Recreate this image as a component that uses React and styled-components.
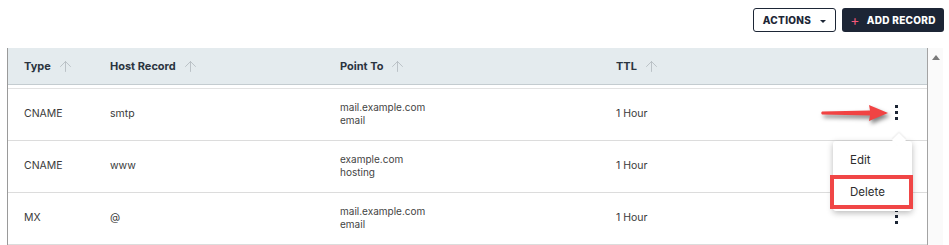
import React from "react";
import styled, { createGlobalStyle } from "styled-components";
import { ArrowUp } from "lucide-react";

const GlobalStyle = createGlobalStyle`
  body {
    margin: 0;
    background: #fff;
    font-family: Inter, "Liberation Sans", Arial, sans-serif;
  }
`;

const records = [
  { type: "CNAME", host: "smtp", point: "mail.example.com", note: "email", ttl: "1 Hour" },
  { type: "CNAME", host: "www", point: "example.com", note: "hosting", ttl: "1 Hour" },
  { type: "MX", host: "@", point: "mail.example.com", note: "email", ttl: "1 Hour" },
];

const columns = ["Type", "Host Record", "Point To", "TTL"];

const App = () => {
  return (
    <Page>
      <GlobalStyle />
      <Toolbar>
        <OutlineButton>
          ACTIONS <Caret />
        </OutlineButton>
        <PrimaryButton>
          <Plus>+</Plus> ADD RECORD
        </PrimaryButton>
      </Toolbar>
      <TableArea>
        <TableWrap>
          <HeaderRow>
            {columns.map((c) => (
              <HeadCell key={c}>
                {c}
                <ArrowUp size={17} strokeWidth={1.2} color="#b3bbbf" />
              </HeadCell>
            ))}
            <span />
          </HeaderRow>
          {records.map((r, i) => (
            <Row key={i}>
              <Cell>{r.type}</Cell>
              <Cell>{r.host}</Cell>
              <PointCell>
                <span>{r.point}</span>
                <span>{r.note}</span>
              </PointCell>
              <Cell>{r.ttl}</Cell>
              <Kebab>
                <i />
                <i />
                <i />
              </Kebab>
            </Row>
          ))}

          <Pointer width="72" height="24" viewBox="0 0 72 24">
            <path d="M2 9.6 L50 8.6 L49 3 L68 11 L49 19 L50 13.4 L2 12.6 Q0.5 11 2 9.6 Z" fill="#f14343" />
          </Pointer>

          <Menu>
            <MenuItem>Edit</MenuItem>
            <MenuItem $marked>Delete</MenuItem>
          </Menu>
        </TableWrap>
        <Scrollbar>
          <ScrollUp />
        </Scrollbar>
      </TableArea>
    </Page>
  );
};

export default App;

const Page = styled.div`
  width: 949px;
  height: 245px;
  overflow: hidden;
`;

const Toolbar = styled.div`
  display: flex;
  justify-content: flex-end;
  gap: 6px;
  padding: 8px 5px 0 0;
  height: 24px;
`;

const ButtonBase = styled.button`
  display: flex;
  align-items: center;
  justify-content: center;
  height: 24px;
  border-radius: 3px;
  font-family: Inter, "Liberation Sans", Arial, sans-serif;
  font-size: 10px;
  font-weight: 800;
  letter-spacing: 0.3px;
  padding: 0;
  box-sizing: border-box;
`;

const OutlineButton = styled(ButtonBase)`
  width: 83px;
  background: #fff;
  color: #1d2636;
  border: 1px solid #1d2636;
  gap: 9px;
`;

const Caret = styled.span`
  width: 0;
  height: 0;
  border-left: 3px solid transparent;
  border-right: 3px solid transparent;
  border-top: 3px solid #1d2636;
  margin-top: 2px;
`;

const PrimaryButton = styled(ButtonBase)`
  width: 102px;
  background: #1c2535;
  color: #fff;
  border: none;
  gap: 7px;
`;

const Plus = styled.span`
  color: #f2587a;
  font-size: 14px;
  font-weight: 400;
  line-height: 1;
`;

const TableArea = styled.div`
  display: flex;
  margin-top: 16px;
  margin-left: 7px;
  border-left: 1px solid #9a9a9a;
  height: 197px;
`;

const TableWrap = styled.div`
  position: relative;
  flex: 1;
`;

const grid = `
  display: grid;
  grid-template-columns: 86px 230px 276px 1fr 44px;
  padding-left: 16px;
  align-items: center;
`;

const HeaderRow = styled.div`
  ${grid}
  height: 36px;
  background: #e4ebee;
  border-bottom: 1px solid #c4ccd0;
  box-shadow: 0 3px 0 #fff, 0 4px 0 #e2e2e2;
  margin-bottom: 4px;
`;

const HeadCell = styled.div`
  display: flex;
  align-items: center;
  gap: 6px;
  font-size: 11px;
  font-weight: 700;
  color: #2b3440;
`;

const Row = styled.div`
  ${grid}
  height: 51px;
  border-bottom: 1px solid #dcdcdc;
`;

const Cell = styled.div`
  font-size: 10.5px;
  color: #3a3a3a;
  margin-top: -2px;
`;

const PointCell = styled(Cell)`
  display: flex;
  flex-direction: column;
  line-height: 13px;
  font-size: 10px;
  color: #444;
  margin-top: -2px;
`;

const Kebab = styled.div`
  display: flex;
  flex-direction: column;
  align-items: center;
  gap: 3px;
  padding-right: 18px;
  margin-top: -5px;

  i {
    width: 3px;
    height: 3px;
    background: #1c2535;
  }
`;

const Pointer = styled.svg`
  position: absolute;
  left: 812px;
  top: 54px;
  filter: drop-shadow(2px 3px 2px rgba(0, 0, 0, 0.5));
`;

const Menu = styled.div`
  position: absolute;
  right: 15px;
  top: 93px;
  width: 79px;
  padding: 3px 0 3px;
  background: #fff;
  border-radius: 3px;
  box-shadow: 0 2px 6px rgba(0, 0, 0, 0.28);

  &::before {
    content: "";
    position: absolute;
    top: -6px;
    right: 8px;
    width: 10px;
    height: 10px;
    background: #fff;
    transform: rotate(45deg);
    box-shadow: -1px -1px 2px rgba(0, 0, 0, 0.08);
  }
`;

const MenuItem = styled.div`
  position: relative;
  height: 32px;
  display: flex;
  align-items: center;
  font-size: 11.5px;
  color: #2d2d2d;
  box-sizing: border-box;
  outline: ${(p) => (p.$marked ? "4px solid #f04646" : "none")};
  outline-offset: -3px;
  margin: ${(p) => (p.$marked ? "0 0 0 -2px" : "0")};
  padding-left: ${(p) => (p.$marked ? "19px" : "17px")};
`;

const Scrollbar = styled.div`
  width: 15px;
  margin-right: 6px;
  border-left: 1px solid #a3a3a3;
  background: #fafafa;
  display: flex;
  justify-content: center;
  padding-top: 7px;
`;

const ScrollUp = styled.span`
  width: 0;
  height: 0;
  border-left: 4px solid transparent;
  border-right: 4px solid transparent;
  border-bottom: 5px solid #7a7a7a;
`;
